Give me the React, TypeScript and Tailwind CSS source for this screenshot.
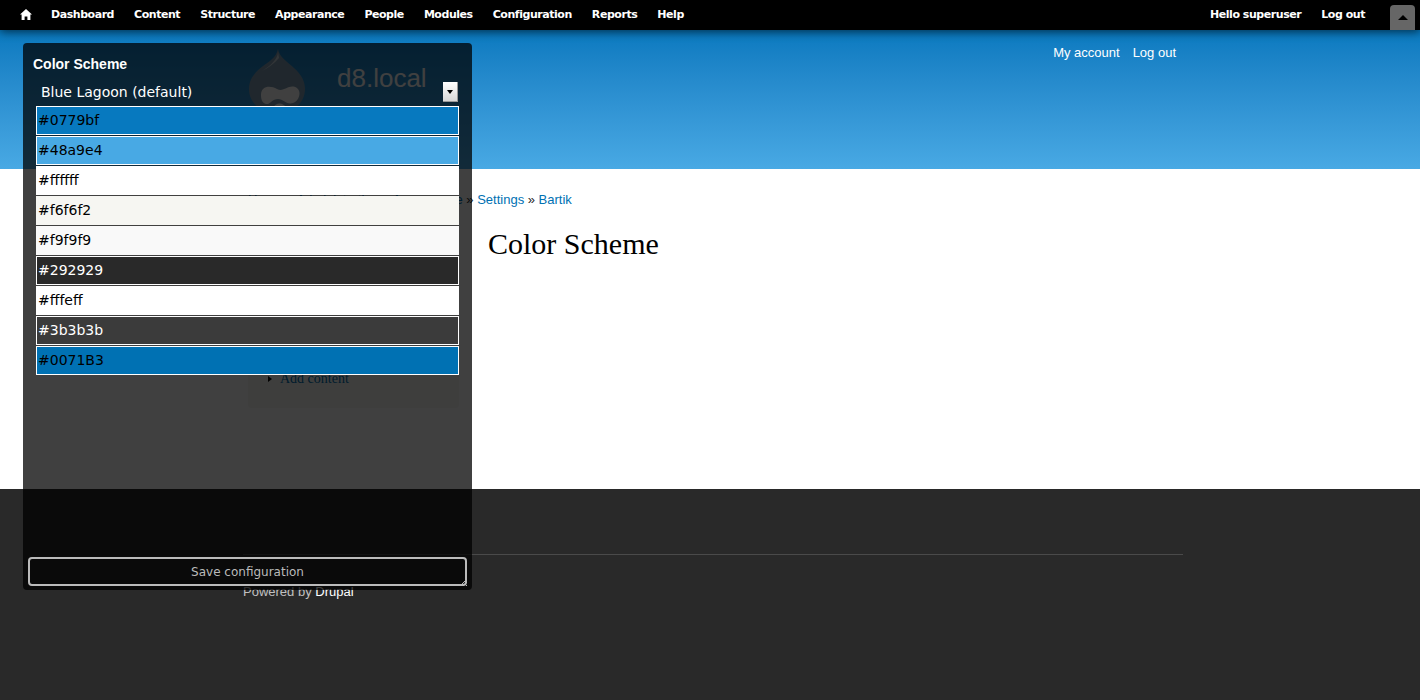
import React from "react";

const nav = ["Dashboard", "Content", "Structure", "Appearance", "People", "Modules", "Configuration", "Reports", "Help"];
const rows: { v: string; bg: string; text: string; b: string }[] = [
  { v: "#0779bf", bg: "bg-[#0779bf]", text: "text-black", b: "border-white" },
  { v: "#48a9e4", bg: "bg-[#48a9e4]", text: "text-black", b: "border-white" },
  { v: "#ffffff", bg: "bg-white", text: "text-black", b: "border-white" },
  { v: "#f6f6f2", bg: "bg-[#f6f6f2]", text: "text-black", b: "border-[#f6f6f2]" },
  { v: "#f9f9f9", bg: "bg-[#f9f9f9]", text: "text-black", b: "border-[#f9f9f9]" },
  { v: "#292929", bg: "bg-[#292929]", text: "text-white", b: "border-white" },
  { v: "#fffeff", bg: "bg-white", text: "text-black", b: "border-white" },
  { v: "#3b3b3b", bg: "bg-[#3b3b3b]", text: "text-white", b: "border-white" },
  { v: "#0071B3", bg: "bg-[#0071b3]", text: "text-black", b: "border-white" },
];

function Logo() {
  return (
    <svg width="58" height="64" viewBox="0 0 58 64" className="shrink-0">
      <path d="M30 0 C31 8 40 13 46 19 C53 25 57 32 57 40 C57 54 45 64 29 64 C13 64 1 54 1 40 C1 24 16 17 23 11 C27 8 29 4 30 0 Z" fill="#7f9db3" />
      <path d="M30 3 C30 10 22 17 14 22 C20 19 27 14 31 9 Z" fill="#c7d3dc" />
      <path d="M13 46 C13 37 22 36 29 40 C36 44 41 34 49 39 C54 43 51 52 45 54 C38 56 36 50 30 50 C24 50 22 56 18 55 C14 54 13 50 13 46 Z" fill="#ffffff" />
      <path d="M24 60 C28 53 34 53 38 58 C34 56 29 57 24 60 Z" fill="#ffffff" />
    </svg>
  );
}

export default function App() {
  return (
    <div className="relative h-[700px] overflow-hidden flex flex-col bg-white font-['Liberation_Sans',sans-serif]">
      <div className="relative z-10 h-[30px] shrink-0 bg-black flex items-center pl-[20px] pr-[5px] text-white text-[11px] font-bold font-['DejaVu_Sans',sans-serif] shadow-[0_2px_10px_rgba(0,0,0,0.6)]">
        <svg width="12" height="11" viewBox="0 0 12 11" className="mr-[19px] mb-[1px]">
          <path d="M6 0 L12 5.6 L10.4 5.6 L10.4 11 L7.4 11 L7.4 7.4 L4.6 7.4 L4.6 11 L1.6 11 L1.6 5.6 L0 5.6 Z" fill="#fff" />
        </svg>
        <nav className="flex gap-[20px] tracking-[-0.45px]">
          {nav.map((n) => (
            <span key={n}>{n}</span>
          ))}
        </nav>
        <div className="ml-auto flex items-center h-full tracking-[-0.45px]">
          <span>Hello superuser</span>
          <span className="ml-[20px]">Log out</span>
          <div className="ml-[25px] mt-[5px] h-[25px] w-[25px] bg-[#666] rounded-t-[4px] flex items-center justify-center">
            <div className="w-0 h-0 border-x-[5px] border-x-transparent border-b-[5px] border-b-black" />
          </div>
        </div>
      </div>

      <header className="h-[139px] shrink-0 bg-gradient-to-b from-[#0779bf] to-[#48a9e4] text-white">
        <div className="ml-[248px] w-[928px] flex justify-between items-start">
          <div className="flex items-center pt-[19px]">
            <Logo />
            <span className="ml-[31px] text-[26px] leading-[30px] -mt-[6px]">d8.local</span>
          </div>
          <div className="flex gap-[13px] text-[13px] pt-[13px]">
            <span>My account</span>
            <span>Log out</span>
          </div>
        </div>
      </header>

      <main className="h-[320px] shrink-0 pl-[248px] pt-[23px]">
        <div className="text-[13px] leading-[16px] text-[#292929]">
          <span className="text-[#0071b3]">Home</span> » <span className="text-[#0071b3]">Administration</span> » <span className="text-[#0071b3]">Appearance</span> » <span className="text-[#0071b3]">Settings</span> » <span className="text-[#0071b3]">Bartik</span>
        </div>
        <div className="flex">
          <aside className="w-[211px] h-[150px] mt-[50px] shrink-0 bg-[#f6f6f2] rounded-[4px] flex flex-col justify-end pb-[19px] pl-[20px]">
            <div className="flex items-center gap-[8px] font-['Liberation_Serif',serif] text-[14px] text-[#0071b3]">
              <div className="w-0 h-0 border-y-[3.5px] border-y-transparent border-l-[4px] border-l-black" />
              <span>Add content</span>
            </div>
          </aside>
          <h1 className="ml-[29px] mt-[18px] font-['Liberation_Serif',serif] text-[30px] leading-[36px] text-black font-normal">Color Scheme</h1>
        </div>
      </main>

      <footer className="flex-1 bg-[#292929] pl-[243px] pt-[65px]">
        <div className="w-[940px] border-t border-[#4a4a4a] pt-[29px] text-[13px] leading-[16px] text-[#c0c0c0]">
          Powered by <span className="text-white">Drupal</span>
        </div>
      </footer>

      <section className="absolute z-20 left-[23px] top-[43px] w-[449px] h-[547px] bg-black/75 rounded-[4px] flex flex-col">
        <h2 className="ml-[10px] mt-[13px] text-[14px] leading-[16px] font-bold text-white">Color Scheme</h2>
        <div className="mt-[9px] ml-[18px] mr-[14px] h-[22px] flex items-center justify-between font-['DejaVu_Sans',sans-serif] text-[14px] text-white">
          <span>Blue Lagoon (default)</span>
          <span className="w-[15px] h-[20px] bg-gradient-to-b from-white to-[#d8d8d8] border-r border-b border-[#999] flex items-center justify-center">
            <span className="w-0 h-0 border-x-[3.5px] border-x-transparent border-t-[4px] border-t-black" />
          </span>
        </div>
        <div className="mt-[3px] ml-[13px] w-[423px] flex flex-col gap-[1px] font-['DejaVu_Sans',sans-serif] text-[14px]">
          {rows.map((r) => (
            <div key={r.v} className={`h-[29px] border ${r.b} ${r.bg} ${r.text} pl-[1px] flex items-center`}>
              {r.v}
            </div>
          ))}
        </div>
        <div className="mt-auto mb-[4px] ml-[5px] mr-[5px] h-[29px] border-2 border-[#bbb] rounded-[4px] flex items-center justify-center font-['DejaVu_Sans',sans-serif] text-[12px] text-[#bbb]">
          Save configuration
        </div>
        <svg width="9" height="9" viewBox="0 0 9 9" className="absolute right-[4px] bottom-[3px]">
          <path d="M1 8 L8 1 M4 8 L8 4 M7 8 L8 7" stroke="#bbb" strokeWidth="1" />
        </svg>
      </section>
    </div>
  );
}
